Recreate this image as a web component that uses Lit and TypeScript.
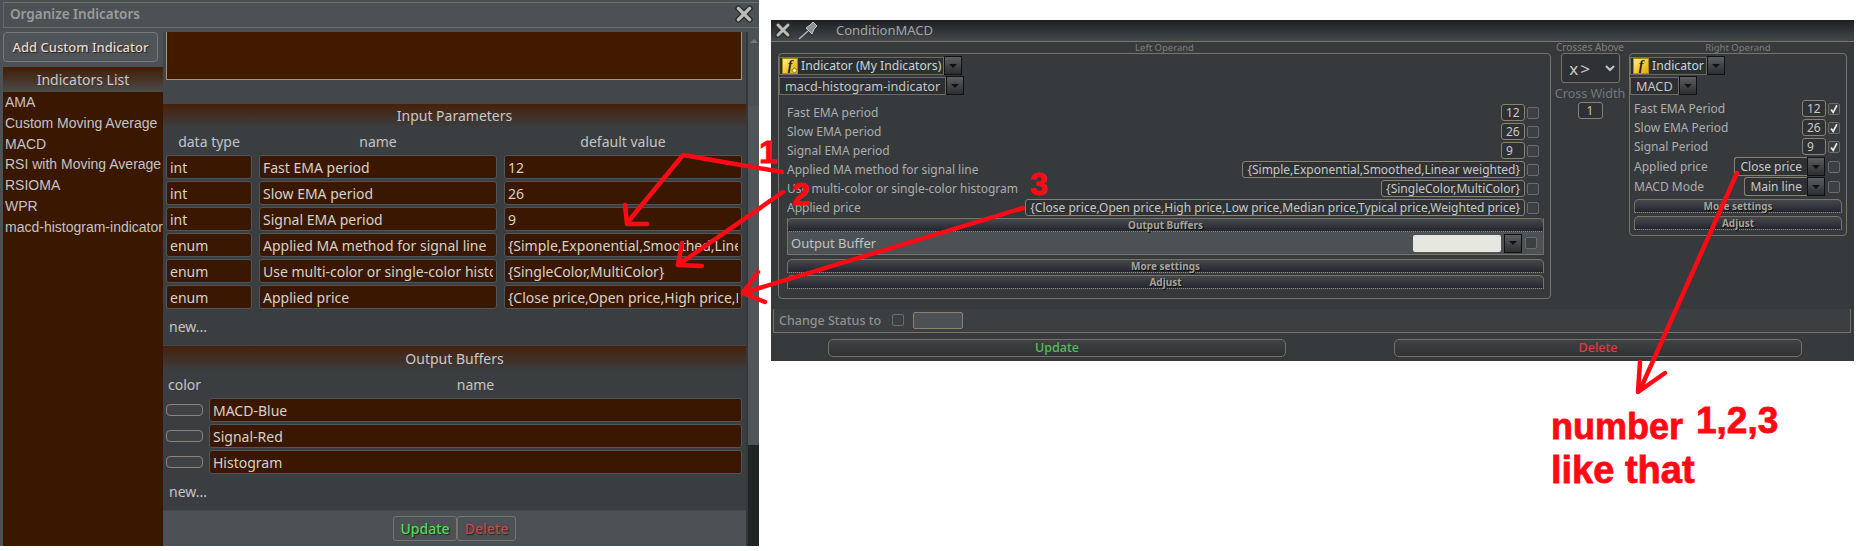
import { LitElement, html, css, svg } from "lit";
import { customElement } from "lit/decorators.js";

const params = [
  ["int", "Fast EMA period", "12"],
  ["int", "Slow EMA period", "26"],
  ["int", "Signal EMA period", "9"],
  ["enum", "Applied MA method for signal line", "{Simple,Exponential,Smoothed,Linear weighted}"],
  ["enum", "Use multi-color or single-color histogram", "{SingleColor,MultiColor}"],
  ["enum", "Applied price", "{Close price,Open price,High price,Low price,Median price,Typical price,Weighted price}"],
];
const indicators = ["AMA", "Custom Moving Average", "MACD", "RSI with Moving Average", "RSIOMA", "WPR", "macd-histogram-indicator"];
const buffers = ["MACD-Blue", "Signal-Red", "Histogram"];

const closeIcon = (size: number) => html`<svg class="x" width=${size} height=${size} viewBox="0 0 16 16">
  <path d="M3 3 L13 13 M13 3 L3 13" stroke="#2c3033" stroke-width="5.5" stroke-linecap="round"/>
  <path d="M3 3 L13 13 M13 3 L3 13" stroke="#bcbcb8" stroke-width="3" stroke-linecap="round"/>
</svg>`;
const fIcon = (dot = false) => html`<span class="ficon">f${dot ? html`<i class="dot"></i>` : ""}</span>`;
const arrow = html`<span class="arrow"></span>`;

@customElement("app-root")
export class AppRoot extends LitElement {
  static styles = css`
    :host { display: block; width: 1860px; height: 551px; position: relative; background: #fff; overflow: hidden; font-family: "Noto Sans", sans-serif; }
    .page { display: flex; align-items: flex-start; gap: 12px; }
    * { box-sizing: border-box; }

    /* left window */
    .org { width: 759px; height: 546px; background: #4c5155; display: flex; flex-direction: column; flex: none; }
    .org-title { margin: 2px 0 4px 3px; height: 26px; border: 1px solid #6f6f68; border-right: none; border-left-color: #666; display: flex; align-items: center; justify-content: space-between; padding: 0 6px 2px 6px; color: #9a9c9c; font-size: 13.5px; font-weight: 600; }
    .org-body { flex: 1; display: flex; min-height: 0; padding-left: 3px; }
    .side { width: 160px; display: flex; flex-direction: column; flex: none; }
    .add { width: 155px; height: 30px; border: 1px solid #77797a; border-radius: 4px; background: #4f5458; color: #ead8c8; font-size: 13px; font-weight: 500; display: flex; align-items: center; justify-content: center; text-shadow: 1px 1px 1px #222; margin-bottom: 5px; }
    .list-head { height: 25px; background: linear-gradient(#431c05, #4b4b4b); color: #c9c9c9; font-size: 14px; text-align: center; line-height: 26px; }
    .list { flex: 1; background: #3a1700; color: #c4c4c4; font: 14px/20.8px "Liberation Sans", sans-serif; padding: 0 0 0 2px; white-space: nowrap; overflow: hidden; }
    .list div { height: 20.8px; }
    .pane { flex: 1; display: flex; flex-direction: column; min-width: 0; }
    .scroller { flex: 1; min-height: 0; display: flex; }
    .content { flex: 1; min-width: 0; display: flex; flex-direction: column; background: #42474a; }
    .notes { height: 48px; flex: none; margin: 0 4px 23px 3px; background: #421a00; border: 1px solid #a5957f; border-top: none; }
    .section { background: #3a3e41; flex: none; }
    .sec-title { background: linear-gradient(#47200a, #3a3e41 95%); color: #c8c8c8; text-align: center; font-size: 14px; height: 26px; line-height: 24px; border-top: 1px solid #44484b; }
    .out .sec-title { height: 27px; line-height: 26px; }
    .cols { height: 26px; display: grid; grid-template-columns: 86px 238px 238px; column-gap: 7px; padding: 0 4px 0 3px; color: #c4c4c4; font-size: 14px; text-align: center; line-height: 26px; }
    .out .cols { grid-template-columns: 37px 1fr; column-gap: 6px; }
    .rows { display: flex; flex-direction: column; gap: 2px; padding: 0 4px 0 3px; }
    .prow { display: grid; grid-template-columns: 86px 238px 238px; column-gap: 7px; }
    .orow { display: grid; grid-template-columns: 37px 1fr; column-gap: 6px; align-items: center; }
    .cell { height: 24px; background: #3a1700; border: 1px solid #50555a; border-radius: 3px; color: #d6d2ca; font-size: 14px; line-height: 23px; padding: 0 3px; overflow: clip; overflow-clip-margin: content-box; white-space: nowrap; }
    .swatch { height: 12px; border: 1px solid #8e8373; border-radius: 4px; background: #3f4346; }
    .new { height: 36px; padding-left: 6px; color: #c4c4c4; font-size: 14px; line-height: 36px; }
    .foot { height: 36px; flex: none; background: #4c5155; display: flex; justify-content: center; align-items: flex-start; padding: 5px 0 0 0; border-top: 1px solid #44484b; }
    .foot span { height: 25px; border: 1px solid #77736a; border-radius: 3px; font-size: 14px; font-weight: 500; display: flex; align-items: center; justify-content: center; text-shadow: 1px 1px 1px #222; }
    .upd { width: 64px; color: #4fdc4f; }
    .del { width: 59px; color: #d0444a; }
    .footwrap { display: flex; flex-direction: column; flex: 1; min-width: 0; }
    .sb { width: 13px; flex: none; display: flex; flex-direction: column; background: #4c5155; border-left: 2px solid #33373a; }
    .sb-up { height: 74px; position: relative; display: flex; justify-content: center; padding-top: 7px; }
    .sb-up::before { content: ""; border: 4px solid transparent; border-bottom: 4px solid #777; border-top: 0; width: 0; height: 0; }
    .sb-th { height: 339px; background: #505559; }
    .sb-end { flex: 1; background: #202424; }

    /* right window */
    .cond { width: 1083px; height: 341px; margin-top: 20px; background: #363a3d; display: flex; flex-direction: column; flex: none; font-size: 12px; color: #a9abab; }
    .cond-title { height: 22px; flex: none; background: linear-gradient(#1d1f21, #44494d); border-bottom: 1px solid #7c7666; display: flex; align-items: center; gap: 6px; padding: 0 0 2px 4px; color: #a3a5a5; font-size: 13px; }
    .cond-title .name { margin-left: 9px; }
    .ops { display: flex; gap: 6px; padding: 0 0 0 7px; height: 257px; flex: none; align-items: flex-start; }
    .op { display: flex; flex-direction: column; }
    .op.l { width: 773px; }
    .op.m { width: 66px; align-items: center; }
    .op.r { width: 218px; }
    .op-t { height: 11px; font-size: 9.5px; line-height: 11px; color: #7f7f78; text-align: center; white-space: nowrap; }
    .m .op-t { font-size: 10px; }
    .box { border: 1px solid #7a7364; border-radius: 4px; padding: 2px 0 0 0; }
    .l .box { height: 246px; }
    .r .box { height: 183px; }
    .dd { display: flex; align-items: center; margin-bottom: 1px; height: 19px; }
    .dd-f { height: 18px; border: 1px solid #6e6a5e; background: #2d3033; color: #c9d6dc; display: flex; align-items: center; padding: 0 2px; gap: 3px; font-size: 12.2px; white-space: nowrap; }
    .dd-f.plain { color: #c4c4c4; padding: 0 5px; font-size: 12.7px; }
    .ficon { width: 16px; height: 16px; background: linear-gradient(135deg, #ffef7a, #e6a800); border: 1px solid #b08a10; color: #222; font: italic 700 14px/14px "Liberation Serif", serif; text-align: center; flex: none; position: relative; }
    .dot { position: absolute; right: 0; bottom: 0; width: 5px; height: 5px; background: #fff6b0; border: 1px solid #a37f10; transform: rotate(45deg); }
    .arrow { width: 18px; height: 19px; flex: none; background: linear-gradient(#5b5f61, #2c2e30); border: 1px solid #111; display: flex; align-items: center; justify-content: center; }
    .arrow::before { content: ""; border: 4px solid transparent; border-top: 4px solid #111; border-bottom: 0; width: 0; height: 0; }
    .frows { margin-top: 9px; display: flex; flex-direction: column; gap: 2px; }
    .frow { display: flex; align-items: center; gap: 2px; height: 17px; padding: 0 11px 0 8px; white-space: nowrap; }
    .frow .lbl { flex: 1; font-size: 12px; color: #acaeae; }
    .inp { height: 17px; border: 1px solid #8a8171; border-radius: 3px; background: #2f3235; color: #c8c8c4; font-size: 12px; line-height: 15px; padding: 0 4px; white-space: nowrap; text-align: left; }
    .num { width: 24px; }
    .wide { text-align: right; }
    .chk { width: 12px; height: 12px; border: 1px solid #6a6c6a; border-radius: 2px; background: #3c4043; flex: none; display: flex; align-items: center; justify-content: center; }
    .chk svg { display: block; }
    .grp { margin: 2px 6px 0 8px; border: 1px solid #7a7364; border-top: none; border-right-color: #6f6a5c; }
    .band { height: 14px; background: linear-gradient(#44484b, #262530); border-top: 1px solid #7a7364; border-left: 1px solid #7a7364; border-right: 1px solid #7a7364; border-bottom: 1px dotted #8a8a80; border-radius: 5px 5px 0 0; font-size: 10px; font-weight: 700; color: #a6a59c; text-align: center; line-height: 12px; text-shadow: 1px 1px 0 #111; }
    .grp .band { margin: 0 -1px; }
    .grp-b { height: 22px; background: #4c5155; display: flex; align-items: center; padding: 0 6px 0 3px; gap: 3px; font-size: 13px; color: #c2c2c0; }
    .grp-b .lbl { flex: 1; }
    .color { width: 88px; height: 17px; background: #e8e6e1; border-radius: 2px; }
    .bands { margin: 4px 6px 0 8px; display: flex; flex-direction: column; gap: 2px; }
    .status { height: 24px; margin: 10px 3px 0 2px; flex: none; background: #3b3f42; border: 1px solid #7a7364; border-top: none; display: flex; align-items: center; padding: 0 0 1px 5px; color: #8f9090; font-size: 12.5px; font-weight: 500; }
    .status .chk { margin-left: 11px; }
    .status .small { width: 50px; height: 17px; margin-left: 9px; background: #4c5155; border: 1px solid #8a8171; border-radius: 2px; }
    .acts { display: flex; padding: 6px 0 0 57px; gap: 108px; }
    .acts span { height: 18px; border: 1px solid #7a7364; border-radius: 5px; background: linear-gradient(#3e4245, #303336); text-align: center; line-height: 16px; font-size: 12.5px; font-weight: 500; }
    .acts .u { width: 458px; color: #54bf54; }
    .acts .d { width: 408px; color: #e03a3a; }
    .cross { width: 59px; height: 30px; border: 1px solid #7a7364; border-radius: 3px; background: #2f3235; color: #c8c8c8; display: flex; align-items: center; justify-content: center; gap: 13px; font-size: 17px; letter-spacing: 2px; padding-left: 4px; }
    .cw { margin-top: 2px; height: 17px; font-size: 12.5px; color: #74767a; line-height: 17px; white-space: nowrap; }
    .m .inp { width: 25px; margin-top: 0; text-align: center; }
    .r .frows { margin-top: 5px; }
    .r .frow { padding: 0 6px 0 4px; }
    .r .frow.sel { height: 19px; }
    .r .frow.sel + .frow.sel { margin-top: -1px; }
    .sel .dropv { height: 19px; border: 1px solid #8a8171; border-right: none; border-radius: 3px 0 0 3px; background: #2f3235; color: #c8c8c4; font-size: 12px; line-height: 17px; padding: 0 5px; }
    .sel .arrow { margin: 0 1px 0 -2px; }
    .r .bands { margin: 3px 4px 0 4px; gap: 3px; }

    .ink { position: absolute; left: 0; top: 0; pointer-events: none; }
    .ink text { font-family: "Liberation Sans", sans-serif; font-weight: 700; fill: #ff0a14; stroke: #ff0a14; stroke-width: 0.8px; }
    .x { flex: none; display: block; }
  `;

  private field(label: string, value: string, wide = false) {
    return html`<div class="frow"><span class="lbl">${label}</span><span class="inp ${wide ? "wide" : "num"}">${value}</span><span class="chk"></span></div>`;
  }
  private checked(label: string, value: string) {
    return html`<div class="frow"><span class="lbl">${label}</span><span class="inp num">${value}</span><span class="chk"><svg width="12" height="12" viewBox="0 0 12 12"><path d="M2.5 6.5 L5 10 L9.5 1.5" fill="none" stroke="#e8e8e8" stroke-width="2"/></svg></span></div>`;
  }

  render() {
    return html`
      <div class="page">
        <section class="org">
          <div class="org-title"><span>Organize Indicators</span>${closeIcon(18)}</div>
          <div class="org-body">
            <div class="side">
              <div class="add">Add Custom Indicator</div>
              <div class="list-head">Indicators List</div>
              <div class="list">${indicators.map((i) => html`<div>${i}</div>`)}</div>
            </div>
            <div class="pane">
              <div class="scroller">
                <div class="footwrap">
                  <div class="content">
                    <div class="notes"></div>
                    <div class="section">
                      <div class="sec-title">Input Parameters</div>
                      <div class="cols"><span>data type</span><span>name</span><span>default value</span></div>
                      <div class="rows">
                        ${params.map((p) => html`<div class="prow"><div class="cell">${p[0]}</div><div class="cell">${p[1]}</div><div class="cell">${p[2]}</div></div>`)}
                      </div>
                      <div class="new">new...</div>
                    </div>
                    <div class="section out">
                      <div class="sec-title">Output Buffers</div>
                      <div class="cols"><span>color</span><span>name</span></div>
                      <div class="rows">
                        ${buffers.map((b) => html`<div class="orow"><div class="swatch"></div><div class="cell">${b}</div></div>`)}
                      </div>
                      <div class="new">new...</div>
                    </div>
                  </div>
                  <div class="foot"><span class="upd">Update</span><span class="del">Delete</span></div>
                </div>
                <div class="sb"><div class="sb-up"></div><div class="sb-th"></div><div class="sb-end"></div></div>
              </div>
            </div>
          </div>
        </section>

        <section class="cond">
          <div class="cond-title">
            ${closeIcon(16)}
            <svg width="24" height="20" viewBox="0 0 24 20">
              <path d="M2 19 L11 11" stroke="#b5b5b5" stroke-width="1.5"/>
              <path d="M9 8 L15 14 L17 9 L20 6 L16 2 L13 5 Z" fill="#8d9094" stroke="#c4c4c4" stroke-width="1"/>
            </svg>
            <span class="name">ConditionMACD</span>
          </div>
          <div class="ops">
            <div class="op l">
              <div class="op-t">Left Operand</div>
              <div class="box">
                <div class="dd"><div class="dd-f">${fIcon(true)}<span>Indicator (My Indicators)</span></div>${arrow}</div>
                <div class="dd"><div class="dd-f plain">macd-histogram-indicator</div>${arrow}</div>
                <div class="frows">
                  ${this.field("Fast EMA period", "12")}
                  ${this.field("Slow EMA period", "26")}
                  ${this.field("Signal EMA period", "9")}
                  ${this.field("Applied MA method for signal line", "{Simple,Exponential,Smoothed,Linear weighted}", true)}
                  ${this.field("Use multi-color or single-color histogram", "{SingleColor,MultiColor}", true)}
                  ${this.field("Applied price", "{Close price,Open price,High price,Low price,Median price,Typical price,Weighted price}", true)}
                </div>
                <div class="grp">
                  <div class="band">Output Buffers</div>
                  <div class="grp-b"><span class="lbl">Output Buffer</span><span class="color"></span>${arrow}<span class="chk"></span></div>
                </div>
                <div class="bands"><div class="band">More settings</div><div class="band">Adjust</div></div>
              </div>
            </div>
            <div class="op m">
              <div class="op-t">Crosses Above</div>
              <div class="cross"><span>x&gt;</span><svg width="10" height="7" viewBox="0 0 10 7"><path d="M1 1 L5 5 L9 1" fill="none" stroke="#c8c8c8" stroke-width="2"/></svg></div>
              <div class="cw">Cross Width</div>
              <div class="inp">1</div>
            </div>
            <div class="op r">
              <div class="op-t">Right Operand</div>
              <div class="box">
                <div class="dd"><div class="dd-f">${fIcon()}<span>Indicator</span></div>${arrow}</div>
                <div class="dd"><div class="dd-f plain">MACD</div>${arrow}</div>
                <div class="frows">
                  ${this.checked("Fast EMA Period", "12")}
                  ${this.checked("Slow EMA Period", "26")}
                  ${this.checked("Signal Period", "9")}
                  <div class="frow sel"><span class="lbl">Applied price</span><span class="dropv">Close price</span>${arrow}<span class="chk"></span></div>
                  <div class="frow sel"><span class="lbl">MACD Mode</span><span class="dropv">Main line</span>${arrow}<span class="chk"></span></div>
                </div>
                <div class="bands"><div class="band">More settings</div><div class="band">Adjust</div></div>
              </div>
            </div>
          </div>
          <div class="status"><span>Change Status to</span><span class="chk"></span><span class="small"></span></div>
          <div class="acts"><span class="u">Update</span><span class="d">Delete</span></div>
        </section>
      </div>

      <svg class="ink" width="1860" height="551" viewBox="0 0 1860 551" fill="none">
        <g stroke="#ff0a14" stroke-width="4.5" stroke-linejoin="round" stroke-linecap="round">
          <path d="M782 172 L683 155 L627 223"/>
          <path d="M625 205 L627 224 L647 224"/>
          <path d="M783 192 L678 265"/>
          <path d="M682 243 L678 265 L702 266"/>
          <path d="M1023 208 L743 293"/>
          <path d="M758 272 L743 293 L765 302"/>
          <path d="M1737 173 L1640 390"/>
          <path d="M1640 362 L1638 392 L1665 373"/>
        </g>
        ${svg`
          <text x="759" y="163" font-size="32">1</text>
          <text x="792" y="205" font-size="32">2</text>
          <text x="1030" y="195" font-size="32">3</text>
          <text x="1551" y="439" font-size="36">number</text>
          <text x="1696" y="433" font-size="37">1,2,3</text>
          <text x="1551" y="483" font-size="38">like that</text>
        `}
      </svg>
    `;
  }
}
